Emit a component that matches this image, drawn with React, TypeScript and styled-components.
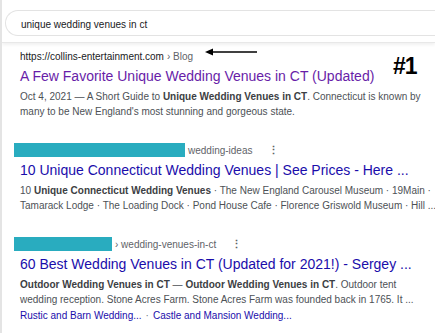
import styled, { createGlobalStyle } from 'styled-components';

const GlobalStyle = createGlobalStyle`
  body {
    margin: 0;
    background: #fff;
    font-family: 'Liberation Sans', Arial, sans-serif;
  }
`;

function App() {
  return (
    <Page>
      <GlobalStyle />
      <SearchHeader>
        <SearchBox>unique wedding venues in ct</SearchBox>
      </SearchHeader>
      <Annotation>
        <svg width='52' height='8' viewBox='0 0 52 8'>
          <line x1='6' y1='4' x2='52' y2='4' stroke='#000' strokeWidth='1.6' />
          <polygon points='0,4 8,0.5 8,7.5' fill='#000' />
        </svg>
      </Annotation>
      <Rank>#1</Rank>
      <Results>
        <Result>
          <UrlRow>
            https://collins-entertainment.com<Crumb>› Blog</Crumb>
          </UrlRow>
          <Title $visited>A Few Favorite Unique Wedding Venues in CT (Updated)</Title>
          <Snippet>
            Oct 4, 2021 — A Short Guide to <b>Unique Wedding Venues in CT</b>. Connecticut is known by
            <br />
            many to be New England's most stunning and gorgeous state.
          </Snippet>
        </Result>
        <Result>
          <UrlRow>
            <Redacted $width={171} />
            <Crumb>wedding-ideas</Crumb>
            <Dots>⋮</Dots>
          </UrlRow>
          <Title>10 Unique Connecticut Wedding Venues | See Prices - Here ...</Title>
          <Snippet>
            10 <b>Unique Connecticut Wedding Venues</b> · The New England Carousel Museum · 19Main ·
            <br />
            Tamarack Lodge · The Loading Dock · Pond House Cafe · Florence Griswold Museum · Hill ...
          </Snippet>
        </Result>
        <Result>
          <UrlRow>
            <Redacted $width={98} />
            <Crumb>› wedding-venues-in-ct</Crumb>
            <Dots>⋮</Dots>
          </UrlRow>
          <Title>60 Best Wedding Venues in CT (Updated for 2021!) - Sergey ...</Title>
          <Snippet>
            <b>Outdoor Wedding Venues in CT</b> — <b>Outdoor Wedding Venues in CT</b>. Outdoor tent
            <br />
            wedding reception. Stone Acres Farm. Stone Acres Farm was founded back in 1765. It ...
          </Snippet>
          <Sitelinks>
            <span>Rustic and Barn Wedding...</span>
            <Sep>·</Sep>
            <span>Castle and Mansion Wedding...</span>
          </Sitelinks>
        </Result>
      </Results>
    </Page>
  );
}

export default App;

const Page = styled.div`
  position: relative;
  width: 435px;
  height: 333px;
  overflow: hidden;
  box-sizing: border-box;
  border-left: 2px solid #e4e4e4;
`;

const SearchHeader = styled.div`
  padding: 10px 0 6px 3px;
  border-bottom: 1px solid #e8e8e8;
  box-shadow: 0 2px 3px rgba(0, 0, 0, 0.06);
`;

const SearchBox = styled.div`
  border: 1px solid #e3e3e3;
  border-right: none;
  border-radius: 13px 0 0 13px;
  padding: 2px 0 0 15px;
  box-sizing: border-box;
  height: 26px;
  display: flex;
  align-items: center;
  font-size: 10px;
  color: #202124;
`;

const Annotation = styled.div`
  position: absolute;
  left: 203px;
  top: 48px;
  line-height: 0;
`;

const Rank = styled.div`
  position: absolute;
  left: 391px;
  top: 53px;
  font-size: 23px;
  font-weight: 900;
  letter-spacing: -1px;
  color: #000;
`;

const Results = styled.div`
  padding: 5px 0 0 18px;
  display: flex;
  flex-direction: column;
  gap: 23px;
`;

const Result = styled.div`
  display: flex;
  flex-direction: column;
`;

const UrlRow = styled.div`
  display: flex;
  align-items: center;
  height: 16px;
  font-size: 10px;
  color: #202124;
  white-space: pre;
`;

const Crumb = styled.span`
  color: #5f6368;
  margin-left: 3px;
`;

const Redacted = styled.span<{ $width: number }>`
  width: ${(p) => p.$width}px;
  height: 14px;
  margin-left: -6px;
  background: #29acbf;
`;

const Dots = styled.span`
  margin-left: 15px;
  font-size: 11px;
  font-weight: bold;
  color: #5f6368;
`;

const Title = styled.div<{ $visited?: boolean }>`
  font-size: 14px;
  line-height: 24px;
  color: ${(p) => (p.$visited ? '#681da8' : '#1a0dab')};
  white-space: nowrap;
`;

const Snippet = styled.div`
  margin-top: 1px;
  font-size: 10px;
  line-height: 15px;
  color: #4d5156;
  white-space: nowrap;
  b {
    color: #3c4043;
    font-weight: bold;
  }
`;

const Sitelinks = styled.div`
  margin-top: 1px;
  font-size: 10px;
  line-height: 15px;
  color: #1a0dab;
  white-space: nowrap;
`;

const Sep = styled.span`
  color: #70757a;
  margin: 0 4px;
`;
